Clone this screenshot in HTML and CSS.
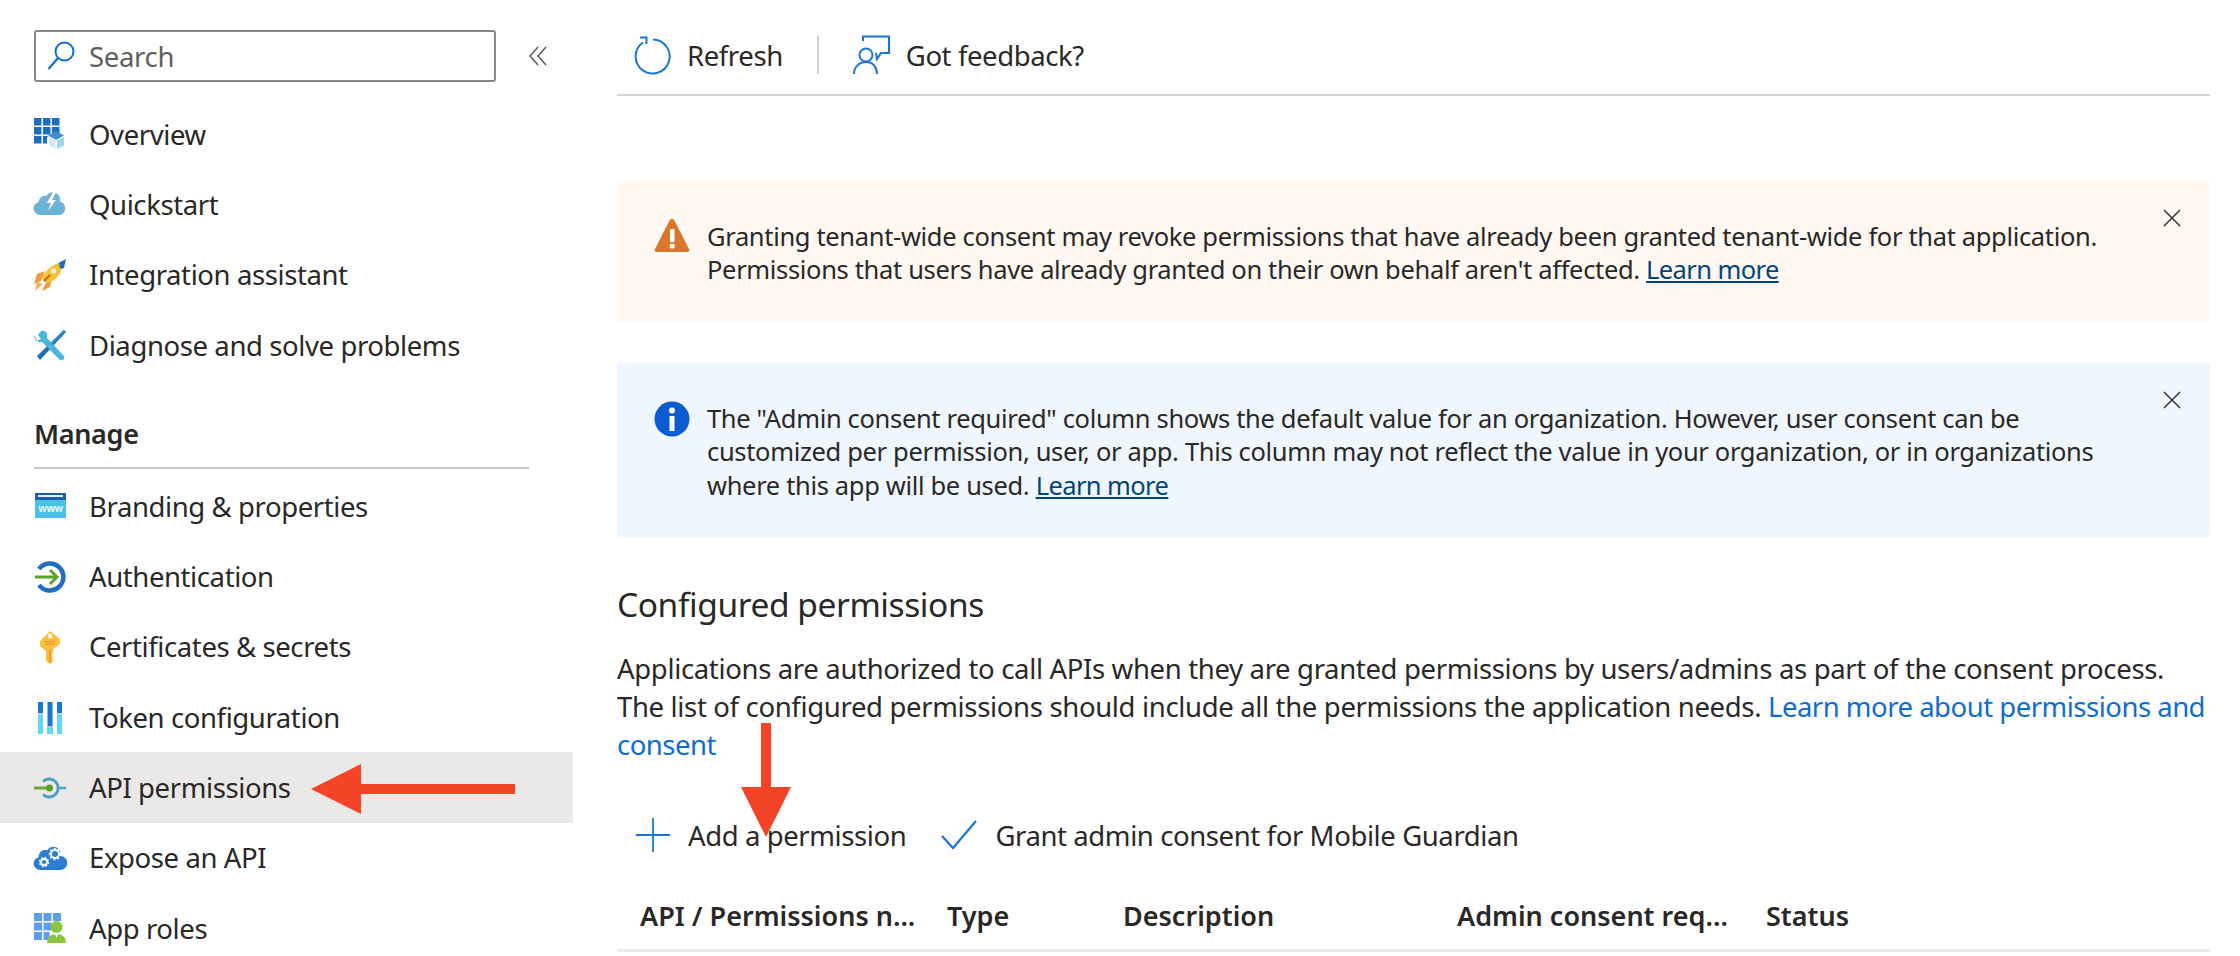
FILE: index.html
```html
<!DOCTYPE html>
<html lang="en">
<head>
<meta charset="utf-8">
<title>API permissions</title>
<link rel="stylesheet" href="styles.css">
</head>
<body>
<div class="page">
  <aside class="sidebar">
    <div class="search-row">
      <div class="search">
        <svg class="search-icon" viewBox="0 0 28 30" width="28" height="30"><circle cx="17.5" cy="10.5" r="9" fill="none" stroke="#0f6cd0" stroke-width="2"/><path d="M11 17 1.5 28" fill="none" stroke="#0f6cd0" stroke-width="2.2"/></svg>
        <span class="search-text">Search</span>
      </div>
      <svg class="collapse" viewBox="0 0 18 20" width="18" height="20"><path d="M9 1 1 10l8 9M17 1l-8 9 8 9" fill="none" stroke="#555" stroke-width="1.4"/></svg>
    </div>
    <nav class="nav">
      <a class="item"><svg class="ico" viewBox="0 0 34 34"><g fill="#1b6ec2"><rect x="1" y="1" width="7.5" height="7.5"/><rect x="10" y="1" width="7.5" height="7.5"/><rect x="19" y="1" width="7.5" height="7.5"/><rect x="1" y="10" width="7.5" height="7.5"/><rect x="10" y="10" width="7.5" height="7.5"/><rect x="19" y="10" width="7.5" height="7.5"/><rect x="1" y="19" width="7.5" height="7.5"/><rect x="10" y="19" width="7.5" height="7.5"/></g><path d="M14 20l9-5 9 5v9l-9 5-9-5z" fill="#fff"/><path d="M23 14l8 4.500-8 4.500-8-4.500z" fill="#3f8fc9"/><path d="M16 20l6.500 3.500V32L16 28.500z" fill="#cfe8f6"/><path d="M31 20l-7 3.500V32l7-3.500z" fill="#a5d4ee"/></svg><span>Overview</span></a>
      <a class="item"><svg class="ico" viewBox="0 0 34 34"><path d="M7 28a6.500 6.500 0 0 1-1.500-12.800C6.500 10.500 10 8 13.500 9c2-3.500 6-4.500 9-3 4 1.500 5 5 4.500 8.500a7 7 0 0 1 0 13.500z" fill="#6db3d8"/><path d="M20 5l-6 11h4l-3 8 8-11h-4l4-8z" fill="#fff"/></svg><span>Quickstart</span></a>
      <a class="item"><svg class="ico" viewBox="0 0 34 34"><path d="M12 13 4 16 1 26l7-3zM19 21l-2 8-8 4 3-7z" fill="#f29a3a"/><path d="M10 26l-8 7 2-9z" fill="#f6b15c"/><path d="M9 21C12 12 20 6 27 5l1 7C27 18 20 25 13 25z" fill="#f4c233"/><path d="M25.500 5 33 1 31 10l-3.500 1z" fill="#1b6ec2"/><circle cx="20.500" cy="13" r="2.700" fill="#e9e9e9"/><path d="M11 23l6-6" stroke="#c8661f" stroke-width="2"/></svg><span>Integration assistant</span></a>
      <a class="item"><svg class="ico" viewBox="0 0 34 34"><path d="M31 2 4 28l3 4L33 4z" fill="#1f6fb4"/><path d="M31 3 19 15" stroke="#2d8fd5" stroke-width="2"/><path d="M8 3 5 7l3 4-4 2-3-6C1 12 4 15 9 14l18 18c3 1 5-1 4-4L14 10c1-5-1-8-6-7z" fill="#4ab5e1"/></svg><span>Diagnose and solve problems</span></a>

      <div class="section">Manage</div>

      <a class="item"><svg class="ico" viewBox="0 0 34 34"><rect x="2" y="4" width="31" height="25" fill="#4cc1e8"/><rect x="2" y="4" width="31" height="7" fill="#1c5fa8"/><rect x="5" y="6" width="25" height="2" fill="#e4eff8"/><text x="17.500" y="23" class="www">www</text></svg><span>Branding &amp; properties</span></a>
      <a class="item"><svg class="ico" viewBox="0 0 34 34"><path d="M6 9a13.500 13.500 0 1 1 0 16" fill="none" stroke="#1b6ec2" stroke-width="4.500"/><path d="M2 17h22M17 10l7 7-7 7" fill="none" stroke="#5da32a" stroke-width="3"/></svg><span>Authentication</span></a>
      <a class="item"><svg class="ico" viewBox="0 0 34 34"><path d="M17 1 7 11v5l6 5v10l4 3 3-3v-1l-1-1 1-2-1-2 1-2v-4l7-5v-5z" fill="#fbbf3d"/><path d="M17 20v13" stroke="#f0a12a" stroke-width="2"/><circle cx="17" cy="6" r="2.500" fill="#fff4d6"/><path d="M12 11.500h10M12 14h10" stroke="#f08a2b" stroke-width="1"/></svg><span>Certificates &amp; secrets</span></a>
      <a class="item"><svg class="ico" viewBox="0 0 34 34"><rect x="5" y="2" width="5" height="32" fill="#62d6f6"/><rect x="5" y="2" width="5" height="11" fill="#1b76d2"/><rect x="14.500" y="2" width="5" height="32" fill="#1b76d2"/><rect x="14.500" y="28" width="5" height="6" fill="#62d6f6"/><rect x="24" y="2" width="5" height="32" fill="#62d6f6"/><rect x="24" y="2" width="5" height="11" fill="#1b76d2"/><path d="M4 14h7M23 14h7M14 27h6" stroke="#d8d8d8" stroke-width="1.500"/></svg><span>Token configuration</span></a>
      <a class="item active"><svg class="ico" viewBox="0 0 34 34"><path d="M10 10.500a9 9 0 1 1 0 13" fill="none" stroke="#4f9fc9" stroke-width="3"/><path d="M25 17h8" stroke="#4f9fc9" stroke-width="2.500"/><path d="M1 17h14" stroke="#6aa72f" stroke-width="3"/><circle cx="16.500" cy="17" r="3.500" fill="#5f9e25"/></svg><span>API permissions</span></a>
      <a class="item"><svg class="ico" viewBox="0 0 34 34"><path d="M7 29a6.500 6.500 0 0 1-1.500-12.800C6 10 11 8 14 9.500c2-3.500 7-5 10.500-2.500 3 2 3.500 5 3 8a7 7 0 0 1-.5 14z" fill="#2b7cd3"/><circle cx="22" cy="13" r="4" fill="none" stroke="#fff" stroke-width="2"/><circle cx="22" cy="13" r="5.500" fill="none" stroke="#fff" stroke-width="1.500" stroke-dasharray="2 2"/><circle cx="11" cy="21" r="3" fill="none" stroke="#fff" stroke-width="1.800"/><circle cx="11" cy="21" r="4.500" fill="none" stroke="#fff" stroke-width="1.300" stroke-dasharray="2 1.500"/></svg><span>Expose an API</span></a>
      <a class="item"><svg class="ico" viewBox="0 0 34 34"><g fill="#5c9fe8"><rect x="1" y="2" width="8" height="8"/><rect x="10.500" y="2" width="8" height="8"/><rect x="20" y="2" width="8" height="8"/><rect x="1" y="11.500" width="8" height="8"/><rect x="10.500" y="11.500" width="8" height="8"/><rect x="1" y="21" width="8" height="8"/><rect x="10.500" y="21" width="6" height="8"/></g><circle cx="23.500" cy="16" r="6" fill="#8cc63f"/><path d="M14 32c0-6 4-9 9.500-9s9.500 3 9.500 9z" fill="#8cc63f"/><path d="M22 23l1.500 4 1.500-4z" fill="#fff"/></svg><span>App roles</span></a>
    </nav>
  </aside>

  <main class="main">
    <div class="toolbar">
      <button class="tool"><svg viewBox="0 0 38 40" width="38" height="40"><path d="M9 7.500a17 17 0 1 0 10-3" fill="none" stroke="#1b76d2" stroke-width="2"/><path d="M6 2.500h6.500V9" fill="none" stroke="#1b76d2" stroke-width="2"/></svg><span>Refresh</span></button>
      <span class="tool-sep"></span>
      <button class="tool"><svg viewBox="0 0 38 40" width="38" height="40"><path d="M10 6V1.500h26v16.500h-8l-4 6-1-6" fill="none" stroke="#1b76d2" stroke-width="2"/><circle cx="13" cy="20" r="6.500" fill="none" stroke="#1b76d2" stroke-width="2"/><path d="M1 39c0-7 5-12 12-12s11 5 11 12" fill="none" stroke="#1b76d2" stroke-width="2"/></svg><span>Got feedback?</span></button>
    </div>

    <section class="banner warn">
      <svg class="b-ico" viewBox="0 0 36 36" width="36" height="36"><path d="M18 1c1 0 2 .5 2.500 1.500L35 31c.8 1.800 0 3-2 3H3c-2 0-2.800-1.200-2-3L15.500 2.500C16 1.500 17 1 18 1z" fill="#d9782d"/><rect x="16" y="11" width="4.500" height="13" rx="1" fill="#fff"/><circle cx="18.200" cy="28" r="2.600" fill="#fff"/></svg>
      <p class="b-text">Granting tenant-wide consent may revoke permissions that have already been granted tenant-wide for that application.<br>Permissions that users have already granted on their own behalf aren't affected. <a class="b-link">Learn more</a></p>
      <svg class="b-close" viewBox="0 0 20 20" width="20" height="20"><path d="M2 2l16 16M18 2 2 18" stroke="#333" stroke-width="1.500"/></svg>
    </section>

    <section class="banner info">
      <svg class="b-ico" viewBox="0 0 36 36" width="36" height="36"><circle cx="18" cy="18" r="17.500" fill="#0b5bd3"/><circle cx="18" cy="9.500" r="3" fill="#fff"/><rect x="15.500" y="15" width="5" height="15" fill="#fff"/></svg>
      <p class="b-text">The "Admin consent required" column shows the default value for an organization. However, user consent can be<br>customized per permission, user, or app. This column may not reflect the value in your organization, or in organizations<br>where this app will be used. <a class="b-link">Learn more</a></p>
      <svg class="b-close" viewBox="0 0 20 20" width="20" height="20"><path d="M2 2l16 16M18 2 2 18" stroke="#333" stroke-width="1.500"/></svg>
    </section>

    <h2 class="title">Configured permissions</h2>
    <p class="desc">Applications are authorized to call APIs when they are granted permissions by users/admins as part of the consent process.<br>The list of configured permissions should include all the permissions the application needs. <a class="link">Learn more about permissions and<br>consent</a></p>

    <div class="actions">
      <button class="action add"><svg viewBox="0 0 34 34" width="34" height="34"><path d="M17 0v34M0 17h34" stroke="#1b76d2" stroke-width="1.800"/></svg><span>Add a permission</span></button>
      <button class="action"><svg viewBox="0 0 36 30" width="36" height="30"><path d="M1 16l11 12L35 1" fill="none" stroke="#1b76d2" stroke-width="2.200"/></svg><span>Grant admin consent for Mobile Guardian</span></button>
    </div>

    <div class="thead">
      <span class="th c1">API / Permissions n...</span>
      <span class="th c2">Type</span>
      <span class="th c3">Description</span>
      <span class="th c4">Admin consent req...</span>
      <span class="th c5">Status</span>
    </div>
  </main>
</div>

<svg class="mark mark-h" viewBox="0 0 204 50" width="204" height="50"><path d="M0 25 50 0v20h154v10H50v20z" fill="#f44327"/></svg>
<svg class="mark mark-v" viewBox="0 0 50 114" width="50" height="114"><path d="M20 0h10v64h20l-25 50L0 64h20z" fill="#f44327"/></svg>
</body>
</html>
```

FILE: styles.css
```css
* { box-sizing: border-box; }
html, body { margin: 0; padding: 0; background: #fff; }
body {
  width: 2240px;
  height: 956px;
  overflow: hidden;
  position: relative;
  font-family: "Noto Sans", "Open Sans", sans-serif;
  color: #292827;
}
.page { display: flex; width: 2240px; height: 956px; overflow: hidden; }

/* sidebar */
.sidebar { width: 573px; flex: none; padding-top: 30px; }
.search-row { display: flex; align-items: center; padding-left: 34px; }
.search {
  width: 462px;
  height: 52px;
  border: 2px solid #8a8886;
  border-radius: 3px;
  display: flex;
  align-items: center;
  padding-left: 11px;
}
.search-icon { flex: none; }
.search-text { margin-left: 14px; font-size: 27.5px; color: #605e5c; letter-spacing: -0.33px; }
.collapse { margin-left: 33px; }
.nav { margin-top: 17px; display: flex; flex-direction: column; }
.item {
  height: 70.3px;
  display: flex;
  align-items: center;
  padding-left: 33px;
  font-size: 27.5px;
  letter-spacing: -0.4px;
  white-space: nowrap;
}
.item.active { background: #ebe9e7; }
.ico { width: 34px; height: 34px; flex: none; margin-right: 22px; }
.www { font: 700 10px "Noto Sans", sans-serif; fill: #e8f7fd; text-anchor: middle; }
.section {
  margin: 19px 44px 2px 34px;
  height: 70px;
  border-bottom: 2px solid #c8c6c4;
  font-size: 27px;
  font-weight: 600;
  letter-spacing: -0.33px;
  line-height: 70px;
}

/* main */
.main { margin-left: 44px; width: 1593px; flex: none; }
.toolbar {
  height: 96px;
  border-bottom: 2px solid #d6d6d6;
  display: flex;
  align-items: center;
  padding-left: 17px;
  padding-top: 16px;
}
.tool, .action {
  border: 0;
  background: none;
  padding: 0;
  margin: 0;
  font: inherit;
  color: inherit;
  display: flex;
  align-items: center;
  font-size: 27.5px;
  letter-spacing: -0.4px;
}
.tool svg { margin-right: 15px; }
.tool-sep { width: 2px; height: 38px; background: #d2d0ce; margin: 0 34px 0 34px; }

.banner { position: relative; border-radius: 4px; padding-left: 37px; display: flex; }
.warn { background: #fff7f1; height: 141px; margin-top: 85px; padding-top: 39px; }
.info { background: #eff6fd; height: 174px; margin-top: 41px; padding-top: 39px; }
.b-ico { flex: none; margin-right: 17px; }
.warn .b-ico { margin-top: -2px; }
.info .b-ico { margin-top: -1px; }
.b-text { margin: 0; font-size: 25.5px; line-height: 33.4px; white-space: nowrap; letter-spacing: -0.34px; }
.b-link { color: #004578; text-decoration: underline; letter-spacing: -0.6px; }
.b-close { position: absolute; right: 28px; top: 27px; }

.title { margin: 45px 0 0; font-size: 33.5px; font-weight: 400; line-height: 44px; letter-spacing: -0.42px; }
.desc { margin: 24px 0 0; font-size: 27.5px; line-height: 38px; letter-spacing: -0.34px; white-space: nowrap; }
.link { color: #0f6cd0; letter-spacing: -0.5px; }

.actions { display: flex; align-items: center; margin-top: 46px; padding-left: 19px; height: 50px; }
.action svg { margin-right: 18px; }
.action.add { margin-right: 35px; }

.thead { display: flex; height: 74px; padding-top: 4px; align-items: center; border-bottom: 3px solid #edebe9; margin-top: 18px; position: relative; }
.th { font-size: 27px; font-weight: 600; white-space: nowrap; }
.c1 { margin-left: 23px; width: 307px; }
.c2 { width: 176px; }
.c3 { width: 334px; }
.c4 { width: 309px; }

/* annotation arrows */
.mark { position: absolute; }
.mark-h { left: 311px; top: 764px; }
.mark-v { left: 741px; top: 723px; }
```
